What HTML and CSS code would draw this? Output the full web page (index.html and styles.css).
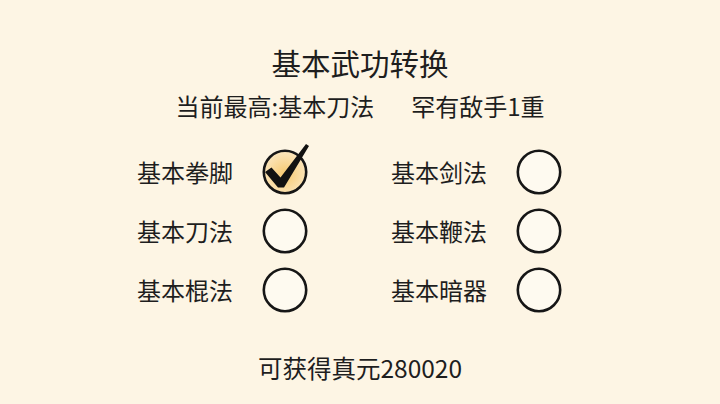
FILE: index.html
```html
<!DOCTYPE html>
<html lang="zh">
<head>
<meta charset="utf-8">
<link rel="stylesheet" href="styles.css">
</head>
<body>
<div class="page">
  <h1 class="title">基本武功转换</h1>
  <div class="sub"><span>当前最高:基本刀法</span><span>罕有敌手1重</span></div>
  <div class="grid">
    <div class="item"><span class="label">基本拳脚</span>
      <svg class="ring" viewBox="0 0 46 46" width="46" height="46">
        <defs><radialGradient id="g" cx="50%" cy="55%" r="50%"><stop offset="0" stop-color="#f6c970"/><stop offset="1" stop-color="#fbe4b8"/></radialGradient></defs>
        <circle cx="23" cy="23" r="21.2" fill="url(#g)" stroke="#161616" stroke-width="2.6"/>
        <path d="M3 23 L9.5 18.5 L18.5 28.5 L44 -5 L47 -3 L22 38.5 L16 38.5 Z" fill="#111"/>
      </svg>
    </div>
    <div class="item"><span class="label">基本剑法</span>
      <svg class="ring" viewBox="0 0 46 46" width="46" height="46"><circle cx="23" cy="23" r="21.2" fill="#fefaf0" stroke="#161616" stroke-width="2.6"/></svg>
    </div>
    <div class="item"><span class="label">基本刀法</span>
      <svg class="ring" viewBox="0 0 46 46" width="46" height="46"><circle cx="23" cy="23" r="21.2" fill="#fefaf0" stroke="#161616" stroke-width="2.6"/></svg>
    </div>
    <div class="item"><span class="label">基本鞭法</span>
      <svg class="ring" viewBox="0 0 46 46" width="46" height="46"><circle cx="23" cy="23" r="21.2" fill="#fefaf0" stroke="#161616" stroke-width="2.6"/></svg>
    </div>
    <div class="item"><span class="label">基本棍法</span>
      <svg class="ring" viewBox="0 0 46 46" width="46" height="46"><circle cx="23" cy="23" r="21.2" fill="#fefaf0" stroke="#161616" stroke-width="2.6"/></svg>
    </div>
    <div class="item"><span class="label">基本暗器</span>
      <svg class="ring" viewBox="0 0 46 46" width="46" height="46"><circle cx="23" cy="23" r="21.2" fill="#fefaf0" stroke="#161616" stroke-width="2.6"/></svg>
    </div>
  </div>
  <div class="reward">可获得真元280020</div>
</div>
</body>
</html>
```
FILE: styles.css
```css
html, body {
  margin: 0;
  padding: 0;
  background: #fdf5e4;
}
body {
  width: 720px;
  height: 404px;
  overflow: hidden;
  font-family: "Noto Sans CJK SC", "Noto Sans", sans-serif;
  color: #1e1e1e;
}
.page {
  display: flex;
  flex-direction: column;
  align-items: center;
}
.title {
  margin: 44px 0 0 0;
  font-size: 29.5px;
  font-weight: 400;
  line-height: 36px;
}
.sub {
  margin-top: 11px;
  font-size: 24px;
  line-height: 30px;
  display: flex;
  gap: 37px;
}
.grid {
  margin-top: 21px;
  align-self: flex-start;
  padding-left: 137px;
  display: grid;
  grid-template-columns: 254px 172px;
  grid-auto-rows: 59px;
}
.item {
  display: flex;
  align-items: center;
  gap: 29px;
}
.label {
  font-size: 24px;
  line-height: 30px;
  width: 96px;
}
.ring {
  overflow: visible;
  display: block;
}
.reward {
  margin-top: 34px;
  font-size: 24.5px;
  line-height: 30px;
}
```
